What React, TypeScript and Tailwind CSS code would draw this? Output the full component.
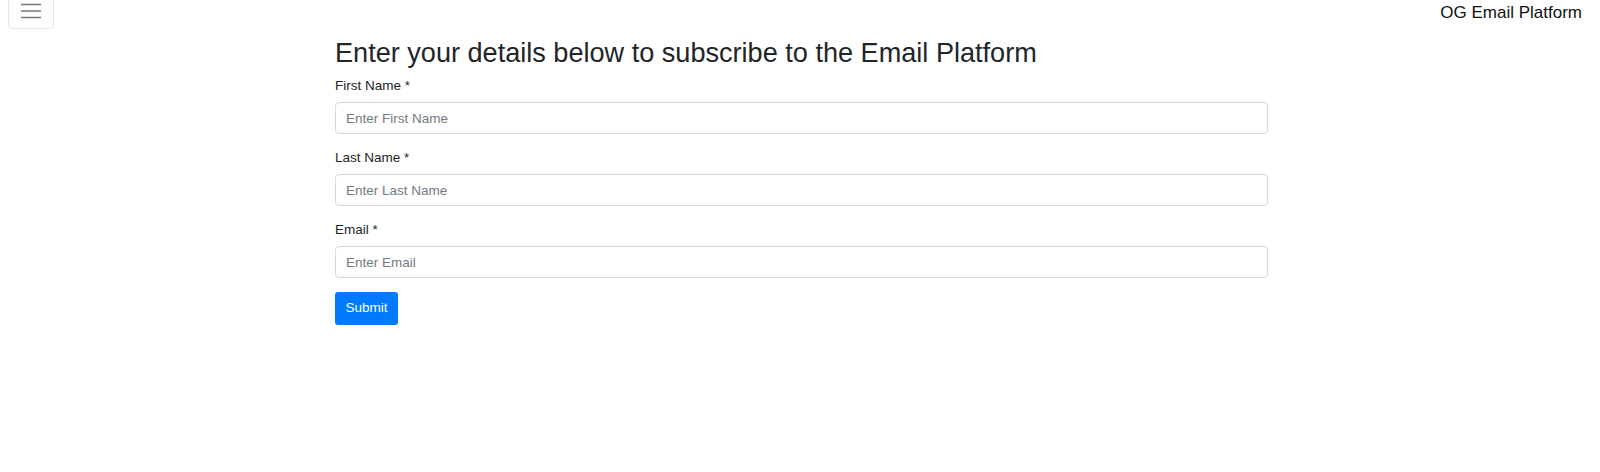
import { useState } from 'react';

interface Campo {
  id: string;
  label: string;
  placeholder: string;
  type: string;
}

const campos: Campo[] = [
  { id: 'firstName', label: 'First Name *', placeholder: 'Enter First Name', type: 'text' },
  { id: 'lastName', label: 'Last Name *', placeholder: 'Enter Last Name', type: 'text' },
  { id: 'email', label: 'Email *', placeholder: 'Enter Email', type: 'email' },
];

const App = () => {
  const [valores, setValores] = useState<Record<string, string>>({});

  return (
    <div className="min-h-screen bg-white text-[#212529] font-['Liberation_Sans',Arial,sans-serif]">
      <nav className="flex items-start justify-between h-[29px]">
        <button className="ml-[8px] -mt-[11px] w-[46px] h-[40px] border border-[#e6e6e6] rounded-[4px] flex items-end justify-center pb-[9px]">
          <svg width="20" height="16" viewBox="0 0 20 16" className="block">
            <path d="M0 1.5h20M0 8h20M0 14.5h20" stroke="#7a7a7a" strokeWidth="1.6" fill="none" />
          </svg>
        </button>
        <span className="mr-[18px] text-[17px] leading-[25px] text-[#111]">OG Email Platform</span>
      </nav>

      <div className="ml-[335px] w-[933px] mt-[8px]">
        <h3 className="text-[27.1px] leading-[32px] font-normal mb-[7px]">
          Enter your details below to subscribe to the Email Platform
        </h3>

        <form onSubmit={(e) => e.preventDefault()}>
          {campos.map((campo) => (
            <div key={campo.id} className="mb-[14px]">
              <label htmlFor={campo.id} className="block text-[13.5px] leading-[20px] mb-[6px]">
                {campo.label}
              </label>
              <input
                id={campo.id}
                type={campo.type}
                placeholder={campo.placeholder}
                value={valores[campo.id] || ''}
                onChange={(e) => setValores({ ...valores, [campo.id]: e.target.value })}
                className="block w-full h-[32px] pl-[10px] pr-[10px] text-[13.5px] border border-[#d3d8dd] rounded-[4px] placeholder:text-[#737b83] outline-none"
              />
            </div>
          ))}

          <button
            type="submit"
            className="w-[63px] h-[33px] flex items-center justify-center bg-[#007bff] text-white text-[13.5px] rounded-[3px]"
          >
            Submit
          </button>
        </form>
      </div>
    </div>
  );
};

export default App;
